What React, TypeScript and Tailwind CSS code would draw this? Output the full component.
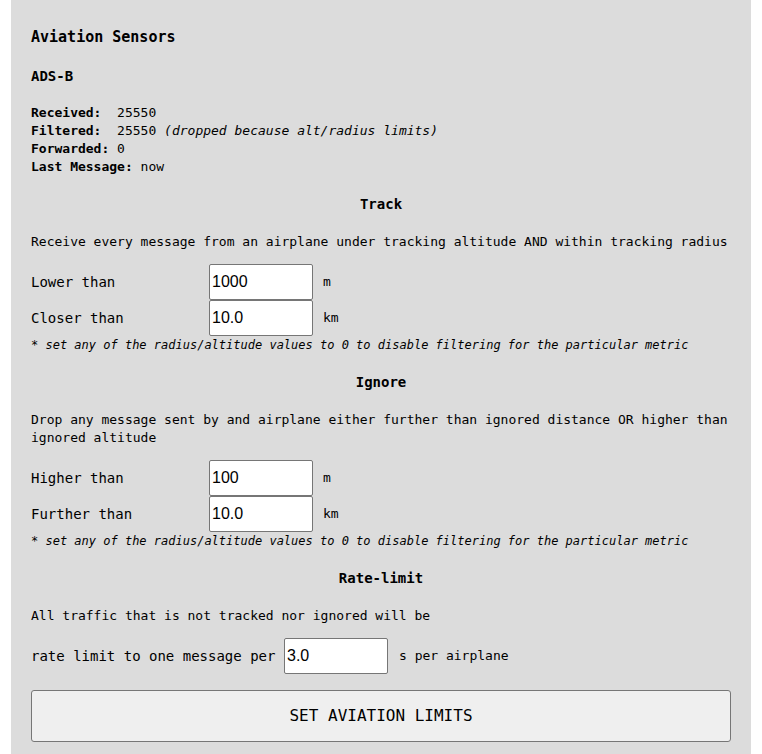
import React from "react";

const mono = { fontFamily: '"DejaVu Sans Mono", monospace' };
const sans = { fontFamily: '"Liberation Sans", Arial, sans-serif' };

function Field({ label, value, unit }: { label: string; value: string; unit: string }) {
  return (
    <div className="flex items-center h-[36px]">
      <label className="w-[178px] shrink-0 text-[14px]">{label}</label>
      <input
        readOnly
        value={value}
        className="w-[104px] h-[36px] bg-white border border-[#767676] rounded-[2px] px-[2px] text-[16px] text-black outline-none"
        style={sans}
      />
      <span className="ml-[10px]">{unit}</span>
    </div>
  );
}

export default function App() {
  return (
    <div className="bg-white min-h-[754px] px-[11px]" style={mono}>
      <div className="bg-[#dcdcdc] px-[20px] pt-[28px] pb-[14px] text-[13px] leading-[18px] text-black">
        <h2 className="text-[15px] font-bold leading-[18px]">Aviation Sensors</h2>
        <h3 className="mt-[21px] text-[14px] font-bold leading-[18px]">ADS-B</h3>
        <div className="mt-[19px] whitespace-pre">
          <div>
            <b>Received:</b>  25550
          </div>
          <div>
            <b>Filtered:</b>  25550 <i>(dropped because alt/radius limits)</i>
          </div>
          <div>
            <b>Forwarded:</b> 0
          </div>
          <div>
            <b>Last Message:</b> now
          </div>
        </div>

        <h4 className="mt-[19px] text-center text-[14px] font-bold">Track</h4>
        <p className="mt-[20px]">
          Receive every message from an airplane under tracking altitude AND within tracking radius
        </p>
        <div className="mt-[13px]">
          <Field label="Lower than" value="1000" unit="m" />
          <Field label="Closer than" value="10.0" unit="km" />
        </div>
        <p className="italic text-[12px]">
          * set any of the radius/altitude values to 0 to disable filtering for the particular metric
        </p>

        <h4 className="mt-[19px] text-center text-[14px] font-bold">Ignore</h4>
        <p className="mt-[20px]">
          Drop any message sent by and airplane either further than ignored distance OR higher than ignored
          altitude
        </p>
        <div className="mt-[13px]">
          <Field label="Higher than" value="100" unit="m" />
          <Field label="Further than" value="10.0" unit="km" />
        </div>
        <p className="italic text-[12px]">
          * set any of the radius/altitude values to 0 to disable filtering for the particular metric
        </p>

        <h4 className="mt-[19px] text-center text-[14px] font-bold">Rate-limit</h4>
        <p className="mt-[20px]">All traffic that is not tracked nor ignored will be</p>
        <div className="mt-[13px] flex items-center h-[36px]">
          <label className="w-[253px] shrink-0 text-[14px]">rate limit to one message per</label>
          <input
            readOnly
            value="3.0"
            className="w-[104px] h-[36px] bg-white border border-[#767676] rounded-[2px] px-[2px] text-[16px] text-black outline-none"
            style={sans}
          />
          <span className="ml-[11px]">s per airplane</span>
        </div>
        <button
          className="mt-[16px] w-full h-[52px] bg-[#efefef] border border-[#767676] rounded-[3px] text-[16px] text-black"
          style={mono}
        >
          SET AVIATION LIMITS
        </button>
      </div>
    </div>
  );
}
